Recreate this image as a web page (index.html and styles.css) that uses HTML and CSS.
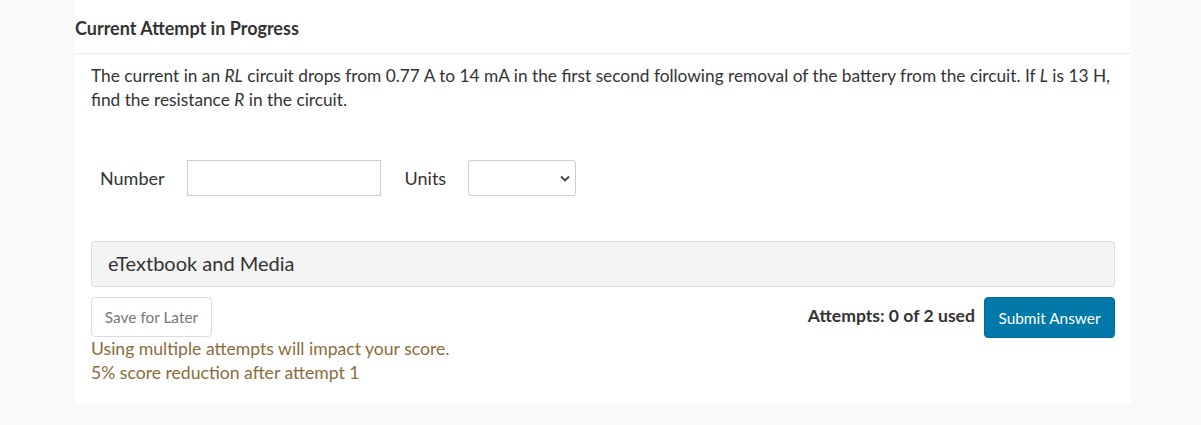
FILE: index.html
```html
<!DOCTYPE html>
<html lang="en">
<head>
    <meta charset="UTF-8">
    <title>Current Attempt in Progress</title>
    <link rel="stylesheet" href="styles.css">
</head>
<body>
<div id="panel">
    <div id="heading">Current Attempt in Progress</div>
    <div id="body">
        <p class="question">The current in an <i>RL</i> circuit drops from 0.77 A to 14 mA in the first second following removal of the battery from the circuit. If <i>L</i> is 13 H, find the resistance <i>R</i> in the circuit.</p>
        <div class="answer">
            <label for="num">Number</label>
            <input type="text" id="num" class="num">
            <label for="units">Units</label>
            <span class="select-wrap">
                <select id="units" class="units">
                    <option></option>
                </select>
                <svg class="chevron" width="10" height="7" viewBox="0 0 10 7"><path d="M1 1.5 L5 5.5 L9 1.5" fill="none" stroke="#444" stroke-width="1.8"/></svg>
            </span>
        </div>
        <div class="media">eTextbook and Media</div>
        <div class="actions">
            <button class="save">Save for Later</button>
            <div class="submit-wrap">
                <span class="attempts">Attempts: 0 of 2 used</span>
                <button class="submit">Submit Answer</button>
            </div>
        </div>
        <div class="warning">
            Using multiple attempts will impact your score.<br>
            5% score reduction after attempt 1
        </div>
    </div>
</div>
</body>
</html>
```

FILE: styles.css
```css
*{
    margin: 0;
    padding: 0;
    box-sizing: border-box;
}
body{
    background: #f9f9f9;
    font-family: Lato, "Open Sans", sans-serif;
    color: #333;
}
#panel{
    width: 1056px;
    margin-left: 75px;
    background: #fff;
    padding-bottom: 19px;
}
#heading{
    height: 54px;
    padding-top: 18px;
    font-size: 18px;
    line-height: 20px;
    font-weight: bold;
    border-bottom: 1px solid #ebebeb;
}
#body{
    padding: 0 16px;
}
.question{
    margin-top: 10px;
    font-size: 17.3px;
    line-height: 24px;
}
.answer{
    display: flex;
    align-items: center;
    margin-top: 48px;
    padding-left: 9px;
    height: 36px;
}
.answer label{
    font-size: 18px;
    margin-right: 22px;
}
.num{
    width: 194px;
    height: 36px;
    border: 1px solid #ccc;
    margin-right: 24px;
    font-size: 16px;
}
.select-wrap{
    position: relative;
    display: block;
}
.units{
    display: block;
    width: 108px;
    height: 36px;
    border: 1px solid #ccc;
    border-radius: 3px;
    background: #fff;
    appearance: none;
    -webkit-appearance: none;
}
.chevron{
    position: absolute;
    right: 6px;
    top: 15px;
}
.media{
    margin-top: 45px;
    height: 46px;
    padding-left: 16px;
    background: #f4f4f4;
    border: 1px solid #ddd;
    border-radius: 3px;
    font-size: 20px;
    line-height: 43px;
}
.actions{
    display: flex;
    justify-content: space-between;
    align-items: flex-start;
    margin-top: 10px;
}
.save{
    width: 121px;
    height: 40px;
    background: #fff;
    border: 1px solid #ddd;
    border-radius: 4px;
    font-family: Lato, sans-serif;
    font-size: 15.4px;
    color: #777;
}
.submit-wrap{
    display: flex;
    align-items: flex-start;
}
.attempts{
    font-size: 17.6px;
    font-weight: bold;
    line-height: 20px;
    margin-top: 9px;
    margin-right: 9px;
}
.submit{
    width: 131px;
    height: 41px;
    background: #0078a8;
    border: 1px solid #006d99;
    border-radius: 4px;
    font-family: Lato, sans-serif;
    font-size: 15.4px;
    color: #fff;
}
.warning{
    margin-top: -1px;
    font-size: 17.6px;
    line-height: 24px;
    color: #8a6d3b;
}
```
